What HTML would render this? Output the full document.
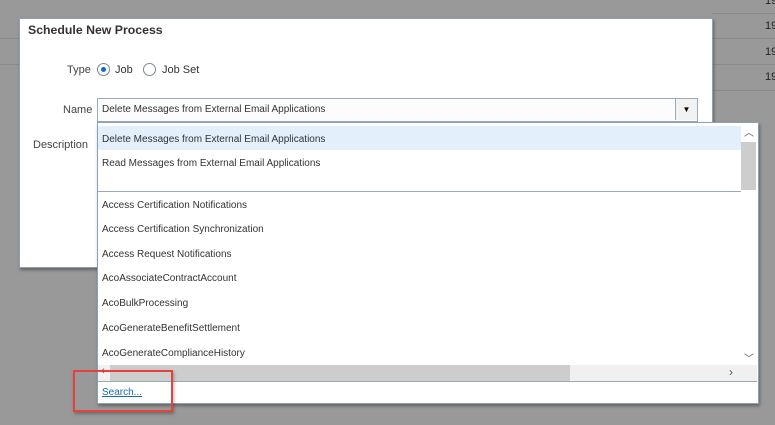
<!DOCTYPE html>
<html><head><style>
body{margin:0;width:775px;height:425px;background:#999;position:relative;overflow:hidden;font-family:"Liberation Sans",sans-serif;}
.a{position:absolute}
.t{font-size:11px;color:#333;white-space:nowrap}
.l{font-size:10px;color:#333;white-space:nowrap;position:absolute}
.ln{position:absolute;height:1px;background:#8a8a8a}
</style></head><body>
<div class="ln" style="left:712px;top:13px;width:63px"></div>
<div class="ln" style="left:0;top:38px;width:775px"></div>
<div class="ln" style="left:0;top:64px;width:775px"></div>
<div class="ln" style="left:712px;top:90px;width:63px"></div>
<div class="a t" style="left:765px;top:-5px;color:#222">19</div>
<div class="a t" style="left:765px;top:20px;color:#222">19</div>
<div class="a t" style="left:765px;top:46px;color:#222">19</div>
<div class="a t" style="left:765px;top:71px;color:#222">19</div>

<div class="a" style="left:19px;top:18px;width:692px;height:248px;background:#fff;border:1px solid #8ea0b4;box-shadow:1px 2px 3px rgba(0,0,0,.35)"></div>
<div class="a" style="left:28px;top:23px;font-size:12.3px;font-weight:bold;color:#333">Schedule New Process</div>
<div class="a t" style="left:67px;top:64px;color:#444">Type</div>
<div class="a" style="left:97px;top:63px;width:11px;height:11px;border:1px solid #7b8a99;border-radius:50%;background:#fff"><div class="a" style="left:3px;top:3px;width:5px;height:5px;border-radius:50%;background:#0a6fd0"></div></div>
<div class="a t" style="left:115px;top:64px">Job</div>
<div class="a" style="left:143px;top:63px;width:11px;height:11px;border:1px solid #7b8a99;border-radius:50%;background:#fff"></div>
<div class="a t" style="left:162px;top:64px">Job Set</div>
<div class="a t" style="left:63px;top:104px;color:#444">Name</div>
<div class="a t" style="left:33px;top:139px;color:#444">Description</div>
<div class="a" style="left:97px;top:98px;width:599px;height:22px;border:1px solid #9aaab8;background:#fcfcfc"></div>
<div class="l" style="left:102px;top:104px">Delete Messages from External Email Applications</div>
<div class="a" style="left:675px;top:99px;width:21px;height:21px;border-left:1px solid #9aaab8;background:#f2f2f2;font-size:8px;text-align:center;line-height:21px">▼</div>

<div class="a" style="left:97px;top:122px;width:660px;height:280px;background:#fff;border:1px solid #8ea0b4;box-shadow:1px 2px 3px rgba(0,0,0,.35)"></div>
<div class="a" style="left:98px;top:126px;width:643px;height:24px;background:#e3effb"></div>
<div class="l" style="left:102px;top:134px">Delete Messages from External Email Applications</div>
<div class="l" style="left:102px;top:158px">Read Messages from External Email Applications</div>
<div class="a" style="left:98px;top:191px;width:643px;height:1px;background:#9aaab8"></div>
<div class="l" style="left:102px;top:200px">Access Certification Notifications</div>
<div class="l" style="left:102px;top:224px">Access Certification Synchronization</div>
<div class="l" style="left:102px;top:249px">Access Request Notifications</div>
<div class="l" style="left:102px;top:273px">AcoAssociateContractAccount</div>
<div class="l" style="left:102px;top:298px">AcoBulkProcessing</div>
<div class="l" style="left:102px;top:323px">AcoGenerateBenefitSettlement</div>
<div class="l" style="left:102px;top:348px">AcoGenerateComplianceHistory</div>
<div class="a" style="left:741px;top:123px;width:16px;height:242px;background:#fff"></div>
<div class="a" style="left:741px;top:142px;width:15px;height:48px;background:#cdcdcd"></div>
<div class="a" style="left:744px;top:124px;font-size:10px;color:#555">︿</div>
<div class="a" style="left:744px;top:350px;font-size:10px;color:#555">﹀</div>
<div class="a" style="left:98px;top:365px;width:659px;height:16px;background:#f0f0f0"></div>
<div class="a" style="left:110px;top:365px;width:460px;height:16px;background:#cdcdcd"></div>
<div class="a" style="left:101px;top:365px;font-size:11px;color:#555">‹</div>
<div class="a" style="left:729px;top:365px;font-size:12px;color:#555">›</div>
<div class="a" style="left:98px;top:381px;width:659px;height:1px;background:#9aaab8"></div>
<div class="l" style="left:102px;top:387px;color:#1a6ca8;text-decoration:underline">Search...</div>
<div class="a" style="left:73px;top:370px;width:96px;height:38px;border:2px solid #e8413c;box-shadow:1px 2px 3px rgba(0,0,0,.3)"></div>
</body></html>
